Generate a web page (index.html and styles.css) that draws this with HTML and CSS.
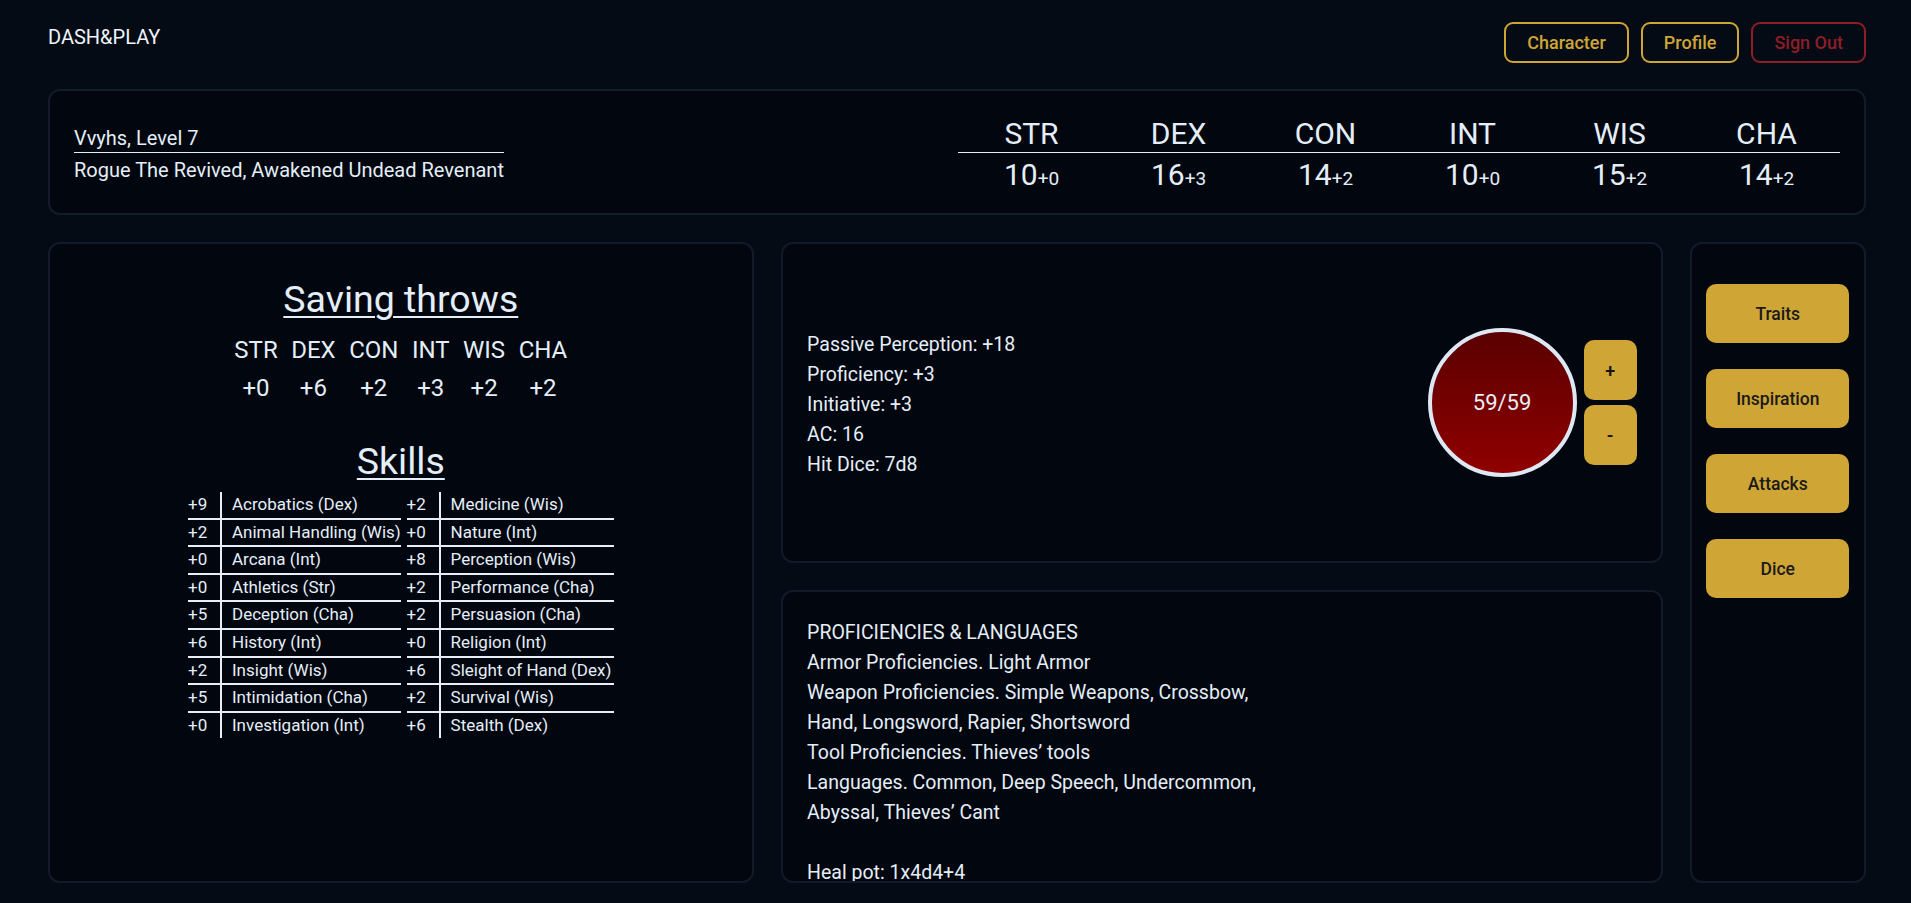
FILE: index.html
```html
<!DOCTYPE html>
<html lang="en">
<head>
<meta charset="utf-8">
<title>DASH&amp;PLAY</title>
<link rel="stylesheet" href="styles.css">
</head>
<body>
<header class="nav">
  <div class="logo">DASH&amp;PLAY</div>
  <nav class="nav-links">
    <button class="nav-btn">Character</button>
    <button class="nav-btn">Profile</button>
    <button class="nav-btn nav-btn-red">Sign Out</button>
  </nav>
</header>

<section class="card hero">
  <div class="char">
    <div class="char-name">Vvyhs, Level 7</div>
    <div class="char-sub">Rogue The Revived, Awakened Undead Revenant</div>
  </div>
  <table class="stats">
    <thead>
      <tr><th>STR</th><th>DEX</th><th>CON</th><th>INT</th><th>WIS</th><th>CHA</th></tr>
    </thead>
    <tbody>
      <tr>
        <td>10<span class="mod">+0</span></td>
        <td>16<span class="mod">+3</span></td>
        <td>14<span class="mod">+2</span></td>
        <td>10<span class="mod">+0</span></td>
        <td>15<span class="mod">+2</span></td>
        <td>14<span class="mod">+2</span></td>
      </tr>
    </tbody>
  </table>
</section>

<main class="grid">
  <section class="card left">
    <h2 class="title">Saving throws</h2>
    <table class="saves">
      <tr><th>STR</th><th>DEX</th><th>CON</th><th>INT</th><th>WIS</th><th>CHA</th></tr>
      <tr><td>+0</td><td>+6</td><td>+2</td><td>+3</td><td>+2</td><td>+2</td></tr>
    </table>
    <h2 class="title">Skills</h2>
    <div class="skills">
      <table class="skill-table skill-left">
        <tr><td class="sm">+9</td><td class="sn">Acrobatics (Dex)</td></tr>
        <tr><td class="sm">+2</td><td class="sn">Animal Handling (Wis)</td></tr>
        <tr><td class="sm">+0</td><td class="sn">Arcana (Int)</td></tr>
        <tr><td class="sm">+0</td><td class="sn">Athletics (Str)</td></tr>
        <tr><td class="sm">+5</td><td class="sn">Deception (Cha)</td></tr>
        <tr><td class="sm">+6</td><td class="sn">History (Int)</td></tr>
        <tr><td class="sm">+2</td><td class="sn">Insight (Wis)</td></tr>
        <tr><td class="sm">+5</td><td class="sn">Intimidation (Cha)</td></tr>
        <tr><td class="sm">+0</td><td class="sn">Investigation (Int)</td></tr>
      </table>
      <table class="skill-table skill-right">
        <tr><td class="sm">+2</td><td class="sn">Medicine (Wis)</td></tr>
        <tr><td class="sm">+0</td><td class="sn">Nature (Int)</td></tr>
        <tr><td class="sm">+8</td><td class="sn">Perception (Wis)</td></tr>
        <tr><td class="sm">+2</td><td class="sn">Performance (Cha)</td></tr>
        <tr><td class="sm">+2</td><td class="sn">Persuasion (Cha)</td></tr>
        <tr><td class="sm">+0</td><td class="sn">Religion (Int)</td></tr>
        <tr><td class="sm">+6</td><td class="sn">Sleight of Hand (Dex)</td></tr>
        <tr><td class="sm">+2</td><td class="sn">Survival (Wis)</td></tr>
        <tr><td class="sm">+6</td><td class="sn">Stealth (Dex)</td></tr>
      </table>
    </div>
  </section>

  <div class="mid">
    <section class="card vitals">
      <div class="info">
        <div class="line">Passive Perception: +18</div>
        <div class="line">Proficiency: +3</div>
        <div class="line">Initiative: +3</div>
        <div class="line">AC: 16</div>
        <div class="line">Hit Dice: 7d8</div>
      </div>
      <div class="hp">
        <div class="hp-circle">59/59</div>
        <div class="hp-btns">
          <button class="hp-btn">+</button>
          <button class="hp-btn">-</button>
        </div>
      </div>
    </section>
    <section class="card profs">
      <div class="line">PROFICIENCIES &amp; LANGUAGES</div>
      <div class="line">Armor Proficiencies. Light Armor</div>
      <div class="line">Weapon Proficiencies. Simple Weapons, Crossbow,</div>
      <div class="line">Hand, Longsword, Rapier, Shortsword</div>
      <div class="line">Tool Proficiencies. Thieves’ tools</div>
      <div class="line">Languages. Common, Deep Speech, Undercommon,</div>
      <div class="line">Abyssal, Thieves’ Cant</div>
      <div class="line">&nbsp;</div>
      <div class="line">Heal pot: 1x4d4+4</div>
    </section>
  </div>

  <section class="card side">
    <button class="side-btn">Traits</button>
    <button class="side-btn">Inspiration</button>
    <button class="side-btn">Attacks</button>
    <button class="side-btn">Dice</button>
  </section>
</main>
</body>
</html>
```

FILE: styles.css
```css
* { box-sizing: border-box; }

html, body {
  margin: 0;
  background: #050b15;
}

body {
  padding: 0 45px 0 48px;
  color: #e4eef9;
  font-family: Roboto, "Liberation Sans", sans-serif;
  height: 903px;
  overflow: hidden;
}

button {
  font-family: Roboto, "Liberation Sans", sans-serif;
  cursor: pointer;
}

/* nav */
.nav {
  display: flex;
  justify-content: space-between;
  align-items: flex-start;
  padding-top: 22px;
}

.logo {
  font-size: 20px;
  line-height: 24px;
  margin-top: 2.5px;
  color: #eef4fb;
}

.nav-links {
  display: flex;
  gap: 12px;
}

.nav-btn {
  height: 41px;
  padding: 0 21px;
  border: 2px solid #cfa535;
  border-radius: 9px;
  background: transparent;
  color: #cfa535;
  font-size: 18px;
  font-weight: 500;
}

.nav-btn-red {
  border-color: #8d1e27;
  color: #8d1e27;
}

/* cards */
.card {
  background: #02060e;
  border: 2px solid #131a2c;
  border-radius: 12px;
}

.hero {
  margin-top: 26px;
  height: 126px;
  padding: 0 24px;
  display: flex;
  justify-content: space-between;
  align-items: center;
}

.char {
  margin-top: 3px;
}

.char-name {
  font-size: 20px;
  line-height: 28px;
  border-bottom: 1px solid #e4eef9;
}

.char-sub {
  font-size: 20px;
  line-height: 28px;
  padding-top: 3px;
}

.stats {
  width: 882px;
  table-layout: fixed;
  border-collapse: separate;
  border-spacing: 0;
  margin-top: 7px;
  font-size: 30px;
  text-align: center;
}

.stats th {
  font-weight: 400;
  line-height: 37px;
  padding: 0;
  border-bottom: 1px solid #e4eef9;
}

.stats td {
  line-height: 37px;
  padding: 3px 0 0;
}

.stats .mod {
  font-size: 19px;
}

/* main grid */
.grid {
  margin-top: 27px;
  height: 641px;
  display: grid;
  grid-template-columns: 4fr 5fr 1fr;
  gap: 27px;
}

.left {
  display: flex;
  flex-direction: column;
  align-items: center;
  padding-top: 33px;
}

.title {
  margin: 0 0 9.5px;
  font-size: 37.5px;
  line-height: 44px;
  font-weight: 400;
  text-decoration: underline;
  text-decoration-thickness: 2px;
  text-underline-offset: 4px;
}

.saves {
  border-spacing: 0;
  font-size: 24px;
  text-align: center;
  margin-bottom: 32px;
}

.saves th,
.saves td {
  font-weight: 400;
  line-height: 38px;
  padding: 0 6.75px;
}

.skills {
  display: flex;
  gap: 5.6px;
}

.skill-table {
  table-layout: fixed;
  border-collapse: separate;
  border-spacing: 0;
  font-size: 17px;
}

.skill-left { width: 213px; }
.skill-right { width: 207px; }

.skill-table td {
  padding: 0;
  line-height: 25.6px;
  white-space: nowrap;
  border-bottom: 2px solid #e8eef6;
}

.skill-table tr:last-child td {
  border-bottom: none;
}

.skill-table .sm {
  width: 32px;
}

.skill-table .sn {
  padding-left: 10px;
  border-left: 2px solid #e8eef6;
}

/* middle */
.mid {
  display: grid;
  grid-template-rows: 321px 1fr;
  gap: 27px;
  min-height: 0;
}

.line {
  font-size: 19.5px;
  line-height: 30px;
  white-space: nowrap;
}

.vitals {
  display: flex;
  justify-content: space-between;
  align-items: center;
  padding: 0 24px 0 24.5px;
}

.info {
  padding-top: 5px;
}

.hp {
  display: flex;
  align-items: center;
  gap: 7px;
}

.hp-circle {
  width: 149px;
  height: 149px;
  border: 4px solid #dde8f4;
  border-radius: 50%;
  background: linear-gradient(to bottom, #5a0000, #900000);
  display: flex;
  align-items: center;
  justify-content: center;
  font-size: 22px;
  color: #e8eef6;
}

.hp-btns {
  display: flex;
  flex-direction: column;
  gap: 5px;
}

.hp-btn {
  width: 53px;
  height: 60px;
  border: none;
  border-radius: 10px;
  background: #cfa535;
  color: #151515;
  font-size: 18px;
  font-weight: 600;
}

.profs {
  padding: 25.5px 24.5px 25px;
  overflow: hidden;
  min-height: 0;
}

/* side */
.side {
  display: flex;
  flex-direction: column;
  align-items: center;
  gap: 25.6px;
  padding-top: 40px;
}

.side-btn {
  width: 143px;
  height: 59.4px;
  border: none;
  border-radius: 10px;
  background: #cfa535;
  color: #1a1a1a;
  font-size: 17.5px;
  font-weight: 500;
}
```
